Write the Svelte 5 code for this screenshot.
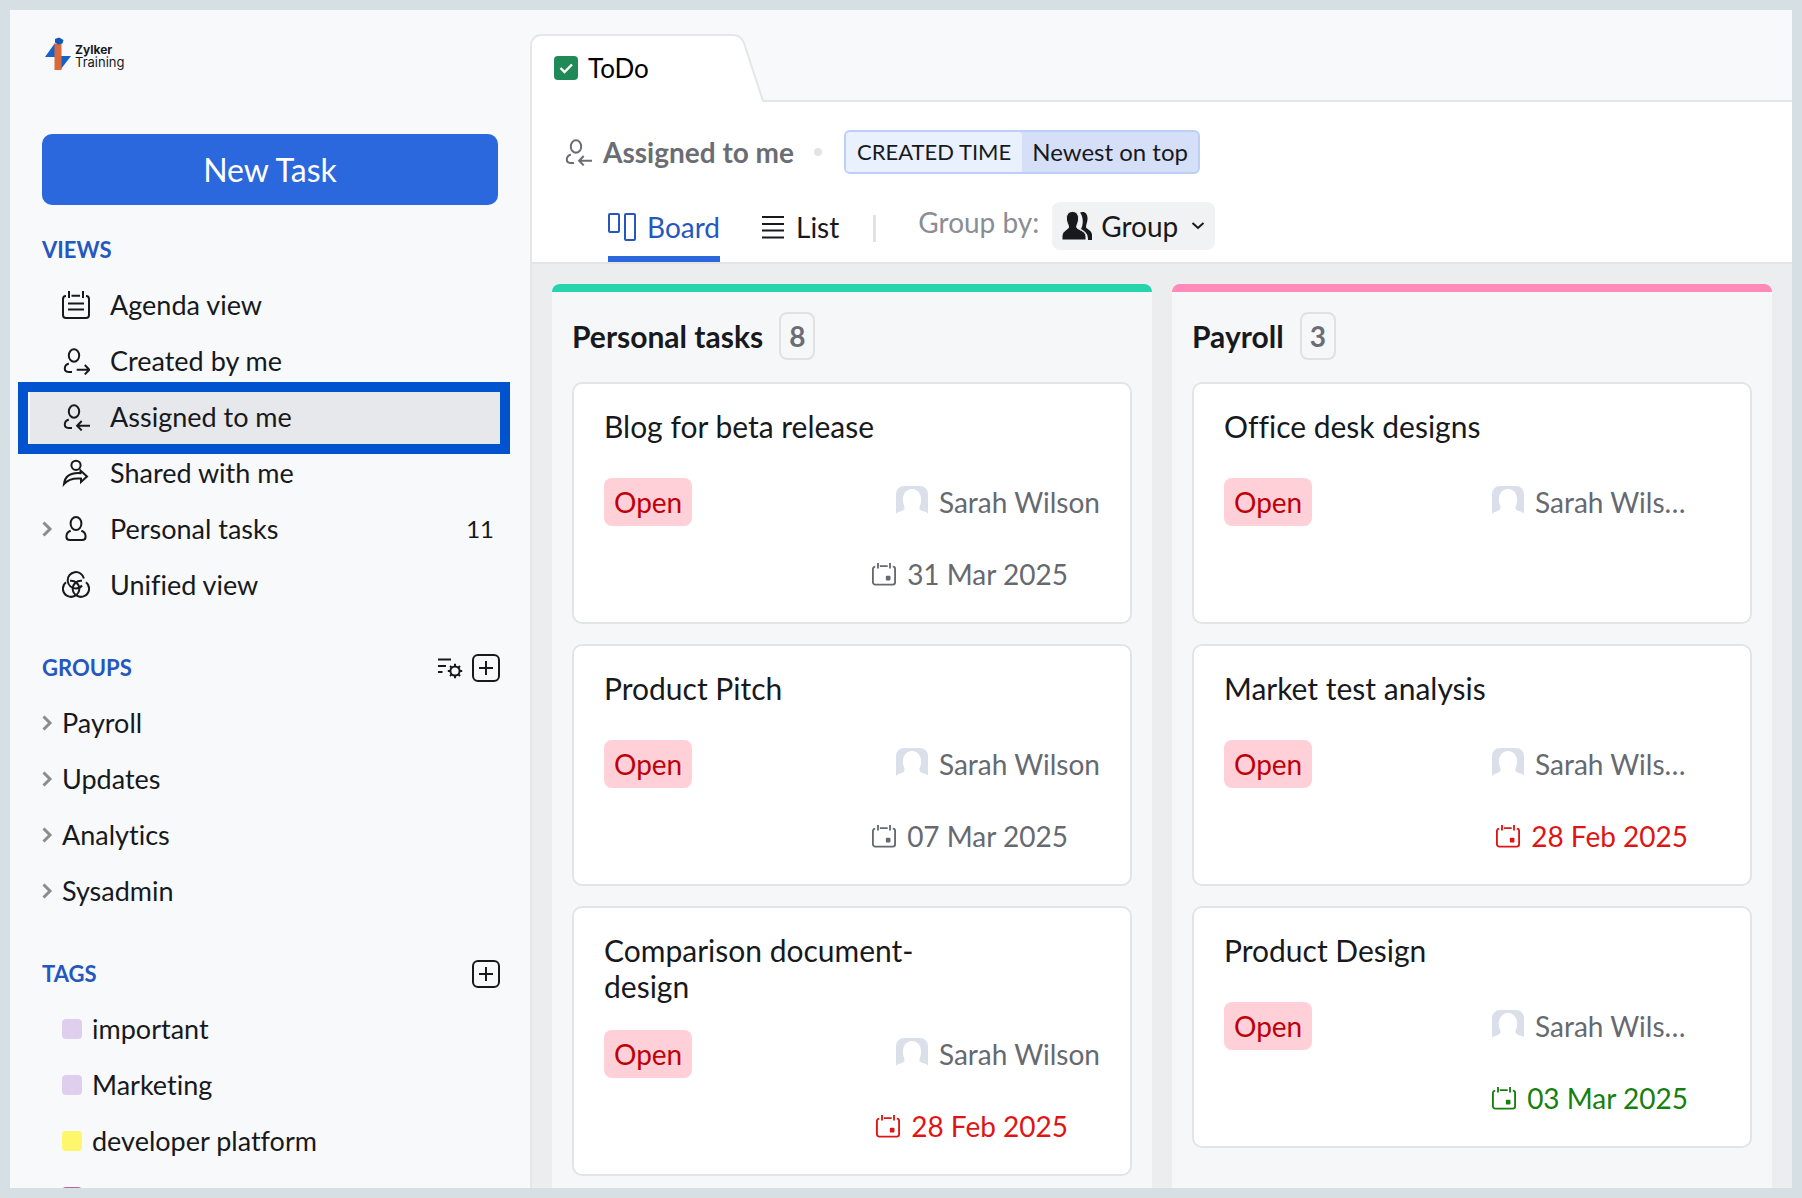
<script>
  const views = [
    { name: 'Agenda view', icon: 'agenda' },
    { name: 'Created by me', icon: 'created' },
    { name: 'Assigned to me', icon: 'assigned', active: true },
    { name: 'Shared with me', icon: 'shared' },
    { name: 'Personal tasks', icon: 'person', count: 11, expandable: true },
    { name: 'Unified view', icon: 'unified' },
  ];

  const groups = ['Payroll', 'Updates', 'Analytics', 'Sysadmin'];

  const tags = [
    { name: 'important', color: '#e0ceee' },
    { name: 'Marketing', color: '#e0ceee' },
    { name: 'developer platform', color: '#fff76b' },
    { name: '', color: '#b9679b' },
  ];

  const columns = [
    {
      name: 'Personal tasks',
      count: 8,
      color: '#26d4ac',
      cards: [
        { title: 'Blog for beta release', date: '31 Mar 2025' },
        { title: 'Product Pitch', date: '07 Mar 2025' },
        { title: 'Comparison document-design', date: '28 Feb 2025', due: 'late' },
      ],
    },
    {
      name: 'Payroll',
      count: 3,
      color: '#ff8aba',
      compact: true,
      cards: [
        { title: 'Office desk designs' },
        { title: 'Market test analysis', date: '28 Feb 2025', due: 'late' },
        { title: 'Product Design', date: '03 Mar 2025', due: 'today' },
      ],
    },
  ];

  let groupBy = $state('Group');
</script>

{#snippet icon(name)}
  <svg class="icon" viewBox="0 0 28 28" aria-hidden="true">
    {#if name === 'agenda'}
      <path d="M4 5a3 3 0 0 0-3 3v16a3 3 0 0 0 3 3h20a3 3 0 0 0 3-3V8a3 3 0 0 0-3-3M7 0v7M21 0v7M9.500 4.800h8.500M6 12.500h16M6 18.500h16" />
    {:else if name === 'created' || name === 'assigned'}
      <ellipse cx="12" cy="8.500" rx="5.200" ry="6.300" />
      <path d="M6.800 16.500C4 17.400 2.800 19 2.800 21.500s1.200 3.400 3.600 3.400H10" />
      {#if name === 'created'}
        <path d="M14.700 22.700H27M22.800 18l4.600 4.700-4.600 4.700" />
      {:else}
        <path d="M28 22.700H15.500M19.700 18l-4.600 4.700 4.600 4.700" />
      {/if}
    {:else if name === 'shared'}
      <circle cx="14" cy="6.300" r="4.600" />
      <path d="M2 25C3 17 9.500 13.600 18.500 14.200v-2.700l6.500 6-6 5.500v-3.400C11.500 18.800 6 20.500 2 25z" />
    {:else if name === 'person'}
      <ellipse cx="14" cy="8.500" rx="5.400" ry="6.500" />
      <path d="M8.700 15.700c-3 1-4.300 3.200-4.300 6 0 2.200 1.200 3.300 3.500 3.300h12.200c2.300 0 3.500-1.100 3.500-3.300 0-2.800-1.300-5-4.300-6" />
    {:else if name === 'unified'}
      <path d="M21.900 7.500A8.200 8.200 0 1 0 14 17.500 8.200 8.200 0 0 0 20 14.500" />
      <path d="M4 11.200A8.200 8.200 0 1 0 17.300 18 8.200 8.200 0 0 0 8 9.800" />
      <path d="M24 11.200A8.200 8.200 0 1 1 10.700 18 8.200 8.200 0 0 1 20 9.800" />
    {/if}
  </svg>
{/snippet}

{#snippet chevron()}
  <svg class="chevron" viewBox="0 0 12 16" aria-hidden="true">
    <path d="M1.500 1.500L8 8l-6.500 6.500" />
  </svg>
{/snippet}

{#snippet plus(label)}
  <button class="icon-btn" aria-label={label}>
    <svg class="icon" viewBox="0 0 28 28">
      <rect x="1" y="1" width="26" height="26" rx="5" />
      <path d="M14 7v14M7 14h14" />
    </svg>
  </button>
{/snippet}

<div class="app">
  <aside class="sidebar">
    <div class="logo">
      <svg viewBox="0 0 26 34" aria-hidden="true">
        <path d="M10 6L0 20h10zM16 19h10L16 32z" fill="#1462cc" />
        <path d="M9.500 6.500h7V33h-7z" fill="#d9693a" />
        <path d="M10 2l4-1.500L18.500 3l-1 3.500-4.500 1-3-2z" fill="#1157b8" />
      </svg>
      <div class="logo-text">
        <strong>Zylker</strong>
        <span>Training</span>
      </div>
    </div>

    <button class="new-task">New Task</button>

    <nav>
      <section>
        <div class="section-head"><h2>VIEWS</h2></div>
        <ul>
          {#each views as view}
            <li>
              <a href="#{view.icon}" class="row" class:active={view.active}>
                <span class="lead">
                  {#if view.expandable}{@render chevron()}{/if}
                </span>
                {@render icon(view.icon)}
                <span>{view.name}</span>
                {#if view.count}<span class="count">{view.count}</span>{/if}
              </a>
            </li>
          {/each}
        </ul>
      </section>

      <section>
        <div class="section-head">
          <h2>GROUPS</h2>
          <div class="actions">
            <button class="icon-btn" aria-label="Manage groups">
              <svg class="icon" viewBox="0 0 28 28">
                <path d="M2 5.500h13M2 12h8M2 18h4.500" />
                <circle cx="19" cy="17" r="4.600" />
                <path d="M19 12.400V9.800M19 21.600v2.600M14.400 17h-2.600M23.600 17h2.600M15.700 13.700l-1.700-1.700M22.300 20.300l1.700 1.700M15.700 20.300L14 22M22.300 13.700l1.700-1.700" />
              </svg>
            </button>
            {@render plus('Add group')}
          </div>
        </div>
        <ul>
          {#each groups as group}
            <li>
              <a href="#{group}" class="row">
                <span class="lead">{@render chevron()}</span>
                <span>{group}</span>
              </a>
            </li>
          {/each}
        </ul>
      </section>

      <section>
        <div class="section-head">
          <h2>TAGS</h2>
          {@render plus('Add tag')}
        </div>
        <ul>
          {#each tags as tag}
            <li>
              <a href="#{tag.name}" class="row">
                <span class="lead"></span>
                <span class="swatch" style="background: {tag.color}"></span>
                <span>{tag.name}</span>
              </a>
            </li>
          {/each}
        </ul>
      </section>
    </nav>
  </aside>

  <main>
    <div class="tabbar">
      <div class="tab">
        <svg class="tab-shape" viewBox="0 0 236 68" aria-hidden="true">
          <path class="fill" d="M1 68V11A10 10 0 0 1 11 1h192q8 0 11 8l19 58v1z" />
          <path class="line" d="M1 68V11A10 10 0 0 1 11 1h192q8 0 11 8l19 58h3" />
        </svg>
        <svg class="check" viewBox="0 0 24 24" aria-hidden="true">
          <rect width="24" height="24" rx="4" fill="#1f8a58" />
          <path d="M6.500 12l4 4 7.500-7.500" fill="none" stroke="#fff" stroke-width="2.400" />
        </svg>
        <span>ToDo</span>
      </div>
    </div>

    <div class="panel">
      <header>
        <div class="title-row">
          {@render icon('assigned')}
          <h1>Assigned to me</h1>
          <span class="dot"></span>
          <button class="sort">
            <span class="sort-key">CREATED TIME</span>
            <span class="sort-value">Newest on top</span>
          </button>
        </div>

        <div class="view-row">
          <button class="view-tab selected">
            <svg class="icon" viewBox="0 0 28 28" aria-hidden="true">
              <rect x="1" y="1" width="10" height="18" rx="1" />
              <rect x="17" y="1" width="10" height="26" rx="1" />
            </svg>
            Board
          </button>
          <button class="view-tab list">
            <svg class="icon" viewBox="0 0 24 28" aria-hidden="true">
              <path d="M1 4h22M1 11h22M1 17.500h22M1 24.500h22" />
            </svg>
            List
          </button>
          <span class="divider"></span>
          <label for="group-by">Group by:</label>
          <div class="select">
            <svg class="people" viewBox="0 0 30 30" aria-hidden="true">
              <path d="M18 1.500c5-2 8 1.500 7.500 7-.3 3.500-1.500 5-1.500 7.500 0 2 6 3 6 8v5h-4c0-5-1-7.500-7-11 2-3 3-12-1-16.500z" />
              <path class="front" d="M10.500.5c4.500 0 6.500 3.500 6 8.500-.3 3-1.800 4.500-1.800 7 0 3 9.300 3 9.300 9.500V29H0v-3.500C0 19 6.500 19 6.500 16c0-2.500-1.700-4-2-7-.5-5 1.500-8.500 6-8.500z" />
            </svg>
            <select id="group-by" bind:value={groupBy}>
              <option>Group</option>
            </select>
            <svg class="caret" viewBox="0 0 14 10" aria-hidden="true">
              <path d="M1.500 2L7 7l5.500-5" />
            </svg>
          </div>
        </div>
      </header>

      <div class="board">
        {#each columns as column}
          <section class="column" class:compact={column.compact} style="border-color: {column.color}">
            <div class="column-head">
              <h2>{column.name}</h2>
              <span class="badge">{column.count}</span>
            </div>
            {#each column.cards as card}
              <article>
                <h3>{card.title}</h3>
                <div class="meta">
                  <span class="status">Open</span>
                  <span class="assignee">
                    <svg class="avatar" viewBox="0 0 32 32" aria-hidden="true">
                      <path d="M0 8a8 8 0 0 1 8-8h16a8 8 0 0 1 8 8v19.500c-2-2-5-2-7.500-3.500-1-.6-1.500-2.500-.7-4C27 13 24.500 3 16 3S5 13 8.200 20c.8 1.500.3 3.400-.7 4-2.500 1.500-5.500 1.500-7.500 4z" fill="#dbdfea" />
                    </svg>
                    <span class="name">Sarah Wilson</span>
                  </span>
                </div>
                <div class="date {card.due}">
                  {#if card.date}
                    <svg viewBox="0 0 26 26" aria-hidden="true">
                      <path d="M3.500 5A2.500 2.500 0 0 0 1 7.500V22a2.500 2.500 0 0 0 2.500 2.500h19A2.500 2.500 0 0 0 25 22V7.500A2.500 2.500 0 0 0 22.500 5M6.500 1v6M19.500 1v6M8.500 4.500h8.500" />
                      <rect x="15" y="15" width="5" height="5" rx="1" fill="currentColor" stroke="none" />
                    </svg>
                    <time>{card.date}</time>
                  {/if}
                </div>
              </article>
            {/each}
          </section>
        {/each}
      </div>
    </div>
  </main>
</div>

<style>
  :global(body) {
    margin: 0;
  }

  .app {
    display: grid;
    grid-template-columns: 520px minmax(0, 1fr);
    height: 100vh;
    box-sizing: border-box;
    border: 10px solid #d6dfe4;
    overflow: hidden;
    background: #f7f9fb;
    color: #17191c;
    font-family: Lato, "Liberation Sans", sans-serif;
    font-size: 27px;
    font-variant-ligatures: none;
    line-height: 36px;
  }

  h1, h2, h3, ul {
    margin: 0;
    padding: 0;
  }

  ul {
    list-style: none;
  }

  button, select {
    border: none;
    padding: 0;
    background: none;
    color: inherit;
    font: inherit;
    cursor: pointer;
  }

  svg {
    flex: none;
    fill: none;
  }

  .icon {
    width: 28px;
    height: 28px;
    stroke: currentColor;
    stroke-width: 2;
  }

  .sidebar {
    min-height: 0;
    overflow: hidden;
  }

  .logo {
    display: flex;
    gap: 4px;
    padding: 27px 35px 0;
    height: 97px;
  }

  .logo svg {
    width: 26px;
    height: 34px;
  }

  .logo-text {
    display: flex;
    flex-direction: column;
    padding-top: 6px;
    font-family: Inter, sans-serif;
    font-size: 13px;
    line-height: 13px;
  }

  .logo-text strong {
    font-size: 12px;
  }

  .new-task {
    display: block;
    width: 456px;
    height: 71px;
    margin-left: 32px;
    border-radius: 10px;
    background: #2b67dd;
    color: #fff;
    font-size: 32px;
  }

  nav {
    padding-top: 18px;
  }

  section + section {
    margin-top: 28px;
  }

  .section-head {
    display: flex;
    align-items: center;
    justify-content: space-between;
    height: 54px;
    padding: 0 30px 0 32px;
  }

  .section-head h2 {
    color: #2657bf;
    font-size: 22px;
  }

  .actions {
    display: flex;
    gap: 8px;
  }

  .icon-btn {
    display: flex;
  }

  .row {
    position: relative;
    display: flex;
    align-items: center;
    height: 56px;
    margin: 0 30px 0 20px;
    color: inherit;
    text-decoration: none;
  }

  .active {
    background: #e6e8eb;
  }

  .active::after {
    content: "";
    position: absolute;
    inset: -7px -10px -9px -12px;
    border: 10px solid #0052cf;
  }

  .lead {
    display: flex;
    width: 32px;
    padding-left: 12px;
    box-sizing: border-box;
  }

  .lead + .icon {
    margin-right: 20px;
  }

  .chevron {
    width: 12px;
    height: 16px;
    stroke: #8a8c8f;
    stroke-width: 3;
  }

  .count {
    margin-left: auto;
    padding-right: 6px;
    font-size: 24px;
  }

  .swatch {
    width: 20px;
    height: 20px;
    margin-right: 10px;
    border-radius: 4px;
  }

  main {
    display: flex;
    flex-direction: column;
    min-height: 0;
  }

  .tabbar {
    padding-top: 24px;
    border-bottom: 2px solid #e4e6e8;
  }

  .tab {
    position: relative;
    display: flex;
    align-items: center;
    gap: 10px;
    width: 236px;
    height: 68px;
    box-sizing: border-box;
    margin-bottom: -2px;
    padding-left: 24px;
    color: #000;
    font-size: 26px;
  }

  .tab-shape {
    position: absolute;
    inset: 0;
  }

  .tab-shape .fill {
    fill: #fff;
  }

  .tab-shape .line {
    stroke: #e4e6e8;
    stroke-width: 2;
  }

  .check {
    position: relative;
    width: 24px;
    height: 24px;
  }

  .tab span {
    position: relative;
  }

  .panel {
    display: flex;
    flex: 1;
    flex-direction: column;
    min-height: 0;
    border-left: 2px solid #e4e6e8;
    background: #ebedef;
  }

  header {
    padding-top: 28px;
    border-bottom: 2px solid #e2e4e6;
    background: #fff;
  }

  .title-row {
    display: flex;
    align-items: center;
    height: 44px;
    padding-left: 32px;
    color: #6a6d74;
  }

  h1 {
    margin-left: 11px;
    font-size: 28px;
  }

  .dot {
    width: 8px;
    height: 8px;
    margin: 0 22px 0 20px;
    border-radius: 50%;
    background: #e2e3e5;
  }

  .sort {
    display: flex;
    height: 44px;
    overflow: hidden;
    border: 2px solid #bccff5;
    border-radius: 6px;
    background: #d6dff8;
    color: #17191c;
    font-size: 24px;
    line-height: 40px;
  }

  .sort-key {
    padding: 0 11px;
    border-radius: 0 4px 0 0;
    background: #e9f1ff;
    font-size: 22px;
  }

  .sort-value {
    padding: 0 10px;
  }

  .view-row {
    display: flex;
    height: 60px;
    margin-top: 28px;
    padding-left: 76px;
  }

  .view-tab {
    display: flex;
    align-items: center;
    gap: 11px;
    box-sizing: border-box;
    padding-bottom: 4px;
    border-bottom: 6px solid transparent;
    font-size: 28px;
  }

  .selected {
    border-color: #2b67dd;
    color: #2657bf;
  }

  .list {
    margin-left: 41px;
  }

  .list .icon {
    width: 24px;
  }

  .divider {
    width: 3px;
    height: 27px;
    margin: 13px 42px 0 34px;
    background: #e2e3e5;
  }

  label {
    margin-right: 13px;
    color: #8a8d94;
    font-size: 28px;
    line-height: 40px;
  }

  .select {
    position: relative;
    height: 48px;
  }

  select {
    appearance: none;
    height: 48px;
    padding: 0 36px 0 49px;
    border-radius: 8px;
    background: #f1f2f4;
    font-size: 28px;
  }

  .people,
  .caret {
    position: absolute;
    pointer-events: none;
  }

  .people {
    top: 9px;
    left: 10px;
    width: 30px;
    height: 30px;
    fill: #17191c;
  }

  .people .front {
    stroke: #f1f2f4;
    stroke-width: 1;
  }

  .caret {
    top: 19px;
    right: 10px;
    width: 14px;
    height: 10px;
    stroke: #17191c;
    stroke-width: 2;
  }

  .board {
    display: grid;
    flex: 1;
    grid-template-columns: repeat(2, minmax(0, 1fr));
    gap: 20px;
    min-height: 0;
    padding: 20px 20px 0;
    overflow: hidden;
  }

  .column {
    display: flex;
    flex-direction: column;
    gap: 20px;
    margin: 0;
    padding: 0 20px;
    border-top: 8px solid;
    border-radius: 8px 8px 0 0;
    background: #f6f7f9;
  }

  .column-head {
    display: flex;
    align-items: center;
    gap: 16px;
    height: 48px;
    padding: 20px 0 2px;
  }

  .column-head h2 {
    font-size: 30px;
  }

  .badge {
    padding: 0 8px;
    border: 2px solid #dfe1e3;
    border-radius: 8px;
    color: #6a6d74;
    font-size: 28px;
    font-weight: 700;
    line-height: 44px;
  }

  article {
    padding: 24px 30px;
    border: 2px solid #e3e4e6;
    border-radius: 10px;
    background: #fff;
  }

  h3 {
    max-width: 340px;
    min-height: 44px;
    margin-bottom: 26px;
    font-size: 30px;
    font-weight: 400;
  }

  .meta {
    display: flex;
    justify-content: space-between;
    height: 48px;
    margin-bottom: 24px;
  }

  .status {
    padding: 0 10px;
    border-radius: 8px;
    background: #ffd0d8;
    color: #c00009;
    font-size: 28px;
    line-height: 48px;
  }

  .assignee,
  .date {
    display: flex;
    align-items: center;
    gap: 11px;
    color: #666970;
    font-size: 28px;
  }

  .avatar {
    width: 32px;
    height: 32px;
  }

  .compact .assignee {
    margin-right: 31px;
  }

  .compact .name {
    max-width: 154px;
    overflow: hidden;
    text-overflow: ellipsis;
    white-space: nowrap;
  }

  .date {
    justify-content: flex-end;
    height: 48px;
    padding-right: 32px;
  }

  .date svg {
    width: 24px;
    height: 24px;
    stroke: currentColor;
    stroke-width: 2;
  }

  .late {
    color: #df1515;
  }

  .today {
    color: #16800f;
  }
</style>
